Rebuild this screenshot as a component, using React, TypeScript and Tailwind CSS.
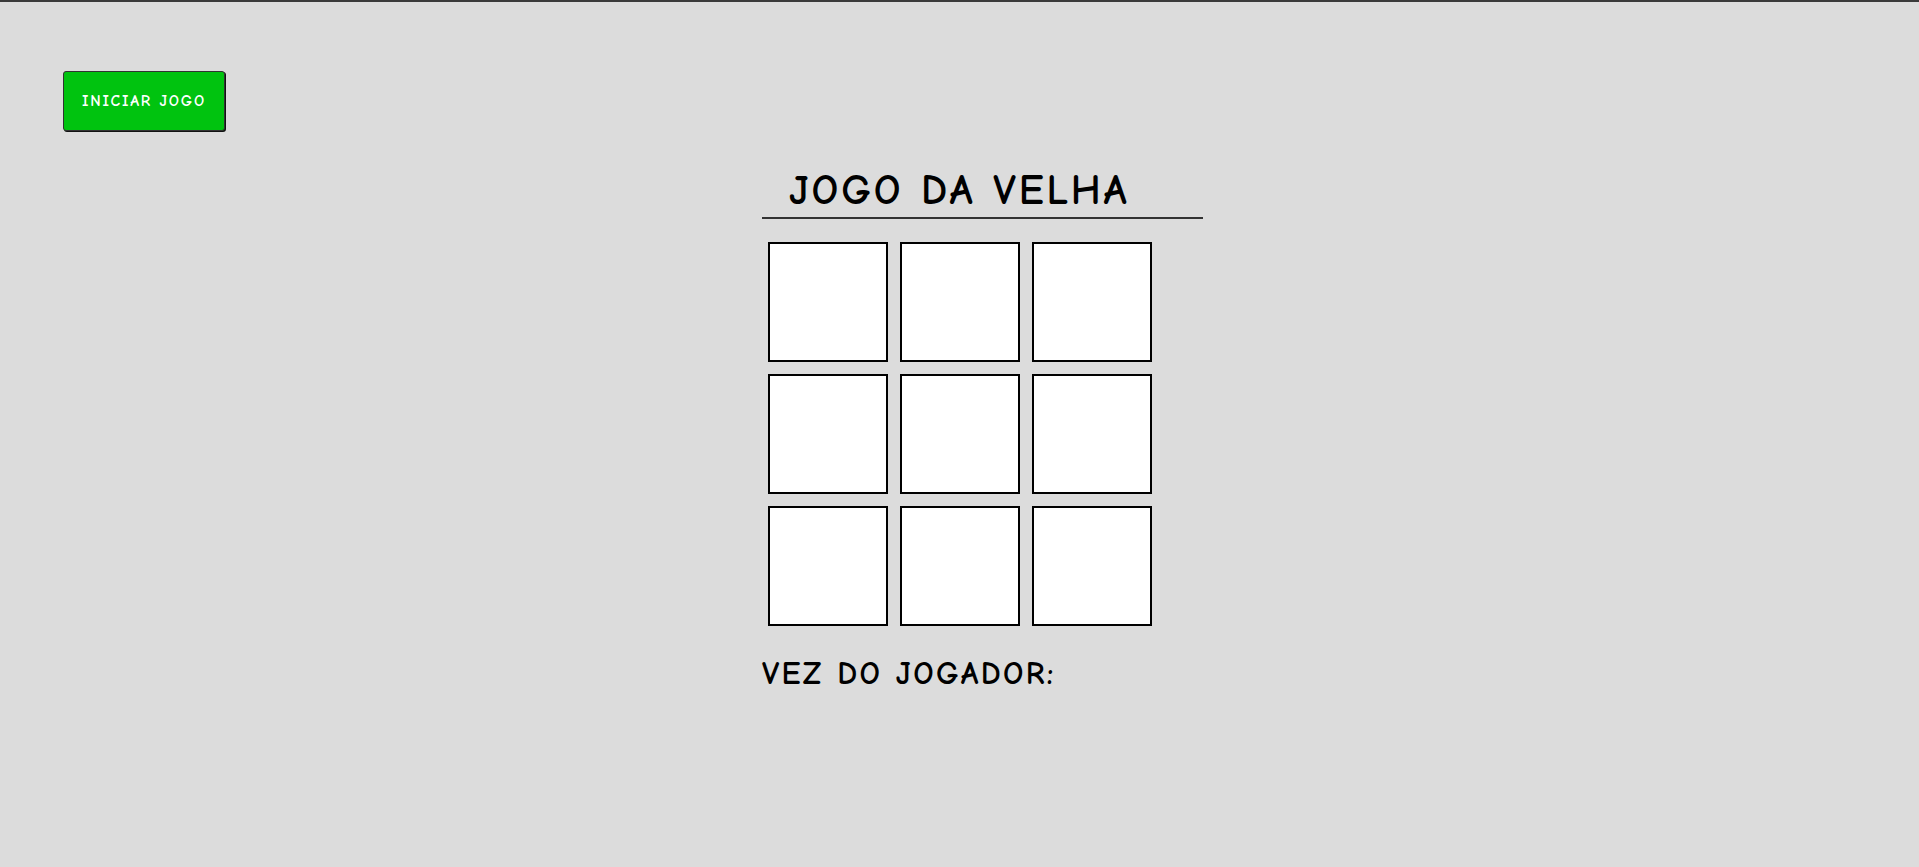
import React from "react";

const font = { fontFamily: '"Comic Sans MS", "Comic Neue", "DejaVu Sans", sans-serif' };

export default function App() {
  const cells = Array.from({ length: 9 });
  return (
    <div className="min-h-screen bg-[#dcdcdc] border-t-[2px] border-[#3a3a3a]" style={font}>
      <div className="pt-[69px] pl-[63px]">
        <button className="w-[162px] h-[60px] bg-[#00c30f] border border-[#333] rounded-[3px] shadow-[1px_1px_0_#111] text-white text-[16px] font-bold tracking-[1.8px] flex items-center justify-center">
          INICIAR JOGO
        </button>
      </div>
      <div className="ml-[762px] w-[441px] mt-[30px]">
        <h1 className="h-[58px] pl-[27px] pt-[9px] text-[42px] font-bold leading-none tracking-[2.8px] text-black border-b-2 border-[#333]">
          JOGO DA VELHA
        </h1>
        <div className="grid grid-cols-[repeat(3,120px)] gap-3 ml-[6px] mt-[23px]">
          {cells.map((_, i) => (
            <div key={i} className="w-[120px] h-[120px] bg-white border-2 border-black" />
          ))}
        </div>
        <p className="mt-[32px] text-[32px] font-bold leading-none tracking-[2.3px] text-black">VEZ DO JOGADOR:</p>
      </div>
    </div>
  );
}
